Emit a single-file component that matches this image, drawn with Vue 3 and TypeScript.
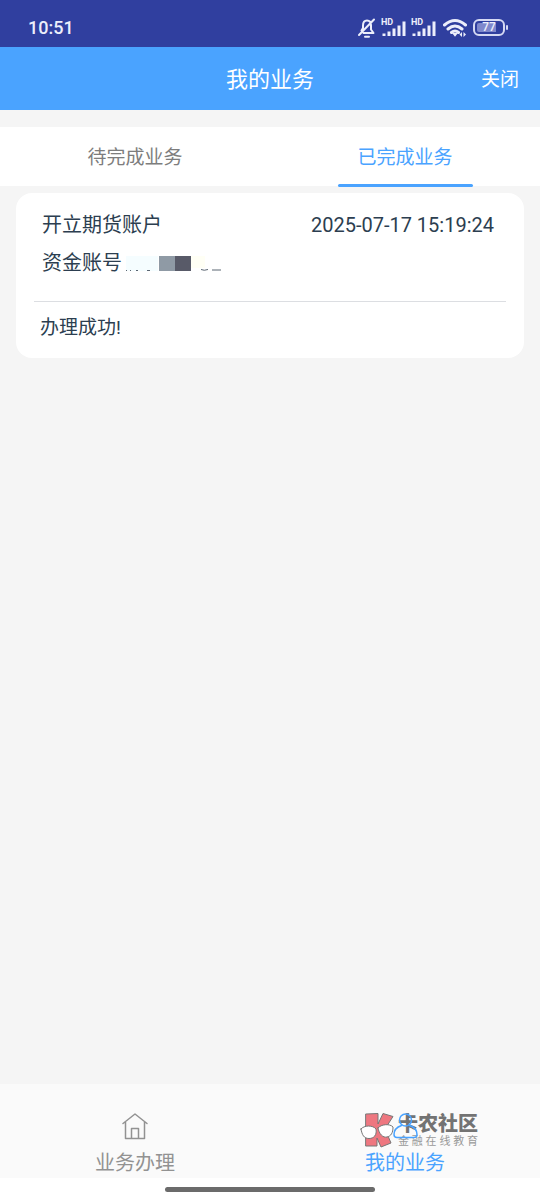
<script setup lang="ts">
import { ref } from 'vue'

interface Tab { id: string; label: string }
interface BusinessRecord { name: string; time: string; result: string }

const tabs: Tab[] = [
  { id: 'pending', label: '待完成业务' },
  { id: 'done', label: '已完成业务' },
]
const activeTab = ref('done')
const records: BusinessRecord[] = [
  { name: '开立期货账户', time: '2025-07-17 15:19:24', result: '办理成功!' },
]
</script>

<template>
  <div class="screen">
    <div class="status">
      <span class="clock">10:51</span>
      <div class="status-icons">
        <svg class="bell" viewBox="0 0 20 22" width="20" height="22" aria-hidden="true">
          <path d="M4.500 13.500 6 11V8.500C6 5.500 7.500 3.500 10 3.500c2.500 0 4 2 4 5v4l2.500 3.500H6.500M8 19.800h4M17 2.500 2 18" />
        </svg>
        <svg v-for="n in 2" :key="n" class="signal" viewBox="0 0 26 20" width="26" height="20" aria-hidden="true">
          <text x="0" y="7">HD</text>
          <path d="M3 18v-2.500M8 18v-4.500M13 18v-7.500M18 18V7.500M23 18V3.500" />
        </svg>
        <svg class="wifi" viewBox="0 0 24 20" width="24" height="20" aria-hidden="true">
          <path d="M1.500 7Q12-2 22.500 7M5 11q7-6 14 0M8.500 14.500q3.500-3 7 0" />
          <path class="solid" d="M9 15h6L12 18.800zM16.500 16.500l2.500-2.500v5zM20.500 14v5l2.500-2.500z" />
        </svg>
        <span class="battery"><span class="cell">77</span></span>
      </div>
    </div>

    <header class="header">
      <h1>我的业务</h1>
      <button type="button" class="close">关闭</button>
    </header>

    <div class="tabs" role="tablist">
      <button
        v-for="tab in tabs"
        :key="tab.id"
        type="button"
        role="tab"
        class="tab"
        :class="{ active: tab.id === activeTab }"
        :aria-selected="tab.id === activeTab"
        @click="activeTab = tab.id"
      >{{ tab.label }}</button>
    </div>

    <main class="content">
      <article v-for="record in records" :key="record.time" class="card">
        <div class="row">
          <span>{{ record.name }}</span>
          <time>{{ record.time }}</time>
        </div>
        <div class="row account">
          <span>资金账号</span>
          <svg class="mask" viewBox="0 0 106 18" width="106" height="18" aria-hidden="true">
            <path fill="#f5fdff" d="M4 1h32v15H4z" />
            <path fill="#8f9aa5" d="M37 1h16v15H37z" />
            <path fill="#585a68" d="M53 1h16v15H53z" />
            <path fill="#fffff5" d="M69 1h14v12H69z" />
            <path class="trace" d="M4 15.500h1M8 15.500h1M14 15.500h2M25 15.500h3M79 14.500q3 1.500 7 0M90 15h9" />
          </svg>
        </div>
        <p class="result">{{ record.result }}</p>
      </article>
    </main>

    <nav class="bottom">
      <a href="#apply" class="nav-item">
        <svg class="icon" viewBox="0 0 28 28" width="28" height="28" aria-hidden="true">
          <path d="M2 11.500 14 2l12 9.500M4.500 10v16.500h19V10M10.500 26.500v-10h7v10" />
        </svg>
        <span>业务办理</span>
      </a>
      <a href="#mine" class="nav-item active">
        <svg class="icon" viewBox="0 0 28 28" width="28" height="28" aria-hidden="true">
          <circle cx="14.500" cy="8" r="6" />
          <path d="M10.500 13.500C6 15 3 18.500 3 22.500q0 3 3 3h17q3 0 3-3c0-4-3-7.500-7.500-9" />
        </svg>
        <span>我的业务</span>
        <div class="watermark">
          <svg viewBox="0 0 36 36" width="36" height="36" aria-hidden="true">
            <path class="k" d="M6 2 18 1.500V12l5-10.500 10 3L25 17l6 14-10 4-4-9v8L6 34z" />
            <path class="lens" d="M1 17c3-4 12-4 15 0 1 6-2 9.500-7 9.500S2 23 1 17zM18 16c3-4 12-4.500 15-1 0 6-2 9-6 10s-8-3-9-9z" />
          </svg>
          <div class="brand">
            <strong>卡农社区</strong>
            <small>金融在线教育</small>
          </div>
        </div>
      </a>
    </nav>
    <div class="home-area"><span class="home-bar"></span></div>
  </div>
</template>

<style>
body {
  margin: 0;
  background: #f5f5f5;
}
</style>

<style scoped>
.screen {
  display: flex;
  flex-direction: column;
  min-height: 100vh;
  background: #f5f5f5;
  color: #2c3e50;
  font-family: Roboto, "Noto Sans CJK SC", sans-serif;
}
button {
  border: 0;
  padding: 0;
  background: none;
  font: inherit;
  cursor: pointer;
}
svg {
  fill: none;
  stroke-linecap: round;
  stroke-linejoin: round;
}
.status {
  display: flex;
  align-items: center;
  justify-content: space-between;
  box-sizing: border-box;
  height: 47px;
  padding: 8px 35px 0 28px;
  background: #303f9f;
  color: #eceefb;
}
.clock {
  font-size: 18px;
  font-weight: 500;
}
.status-icons {
  display: flex;
  align-items: center;
  gap: 4px;
}
.bell {
  stroke: #eceefb;
  stroke-width: 2;
}
.signal {
  stroke: #eceefb;
  stroke-width: 3;
}
.signal path {
  stroke-linecap: butt;
}
.signal text {
  fill: #eceefb;
  stroke: none;
  font-size: 9px;
  font-weight: 700;
}
.wifi {
  margin: 0 2px 0 2px;
  stroke: #eceefb;
  stroke-width: 3;
}
.wifi .solid {
  fill: #eceefb;
  stroke: none;
}
.battery {
  position: relative;
  padding: 2px;
  border: 2px solid #d5d9f3;
  border-radius: 6px;
}
.battery::after {
  content: "";
  position: absolute;
  right: -5px;
  top: 4px;
  width: 2px;
  height: 5px;
  border-radius: 1px;
  background: #d5d9f3;
}
.cell {
  display: block;
  width: 24px;
  border-radius: 2px;
  background: linear-gradient(90deg, #7f88cc 80%, transparent 80%);
  font-size: 12px;
  font-weight: 500;
  line-height: 9px;
  text-align: center;
}
.header {
  display: grid;
  grid-template-columns: 1fr auto 1fr;
  align-items: center;
  box-sizing: border-box;
  height: 63px;
  padding: 0 21px 3px;
  background: #4aa3ff;
  color: #fff;
}
h1 {
  grid-column: 2;
  margin: 0;
  font-size: 22px;
  font-weight: 400;
}
.close {
  justify-self: end;
  color: #fff;
  font-size: 19px;
}
.tabs {
  display: flex;
  margin-top: 17px;
  background: #fff;
}
.tab {
  position: relative;
  flex: 1;
  height: 59px;
  padding-bottom: 2px;
  color: #7d7d7d;
  font-size: 19px;
}
.tab.active {
  color: #4aa3ff;
}
.tab.active::after {
  content: "";
  position: absolute;
  left: 25%;
  right: 25%;
  bottom: -1px;
  height: 3px;
  border-radius: 2px;
  background: #4aa3ff;
}
.content {
  flex: 1;
  padding: 7px 16px;
}
.card {
  padding: 13px 18px 0;
  border-radius: 16px;
  background: #fff;
}
.row {
  display: flex;
  align-items: center;
  justify-content: space-between;
  padding: 0 12px 0 8px;
  font-size: 20px;
  line-height: 38px;
}
.account {
  justify-content: flex-start;
}
.mask {
  margin-top: 2px;
}
.trace {
  stroke: #5b6672;
  stroke-width: 1;
  stroke-linecap: butt;
}
.result {
  margin: 19px 0 0;
  padding: 1px 6px 5px;
  border-top: 1px solid #dcdee2;
  font-size: 19px;
  line-height: 50px;
}
.bottom {
  display: flex;
  height: 94px;
  background: #fafafa;
}
.nav-item {
  position: relative;
  display: flex;
  flex: 1;
  flex-direction: column;
  align-items: center;
  gap: 8px;
  padding-top: 28px;
  color: #929292;
  font-size: 20px;
  line-height: 30px;
  text-decoration: none;
}
.icon {
  position: relative;
  z-index: 1;
  stroke: currentColor;
  stroke-width: 1.5;
}
.nav-item.active {
  color: #4aa3ff;
}
.watermark {
  position: absolute;
  top: 28px;
  left: 90px;
  display: flex;
  gap: 2px;
  color: #737373;
}
.watermark .k {
  fill: #ee7780;
  stroke: #777;
  stroke-width: 1;
}
.watermark .lens {
  fill: #fff;
  stroke: #777;
  stroke-width: 1;
}
.brand {
  display: flex;
  flex-direction: column;
  width: 80px;
}
.brand strong {
  font-size: 20px;
  font-weight: 900;
  line-height: 24px;
}
.brand small {
  color: #999;
  font-size: 11px;
  line-height: 12px;
  text-align: justify;
  text-align-last: justify;
}
.home-area {
  display: flex;
  justify-content: center;
  height: 22px;
  background: #fff;
}
.home-bar {
  width: 39%;
  height: 5px;
  margin-top: 9px;
  border-radius: 3px;
  background: #6b6b6b;
}
</style>
